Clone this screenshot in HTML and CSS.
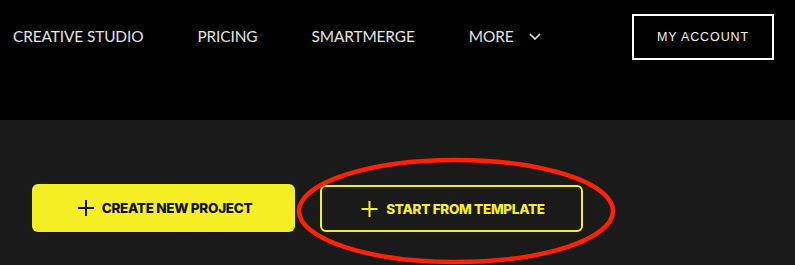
FILE: index.html
```html
<!DOCTYPE html>
<html>
<head>
<meta charset="utf-8">
<link rel="stylesheet" href="styles.css">
</head>
<body>
<header class="topbar">
  <nav class="nav">
    <a class="nav-item">CREATIVE STUDIO</a>
    <a class="nav-item">PRICING</a>
    <a class="nav-item">SMARTMERGE</a>
    <a class="nav-item more">MORE
      <svg class="chev" width="12" height="7" viewBox="0 0 12 7"><path d="M1 1 L6 6 L11 1" fill="none" stroke="#e6e6e6" stroke-width="1.6"/></svg>
    </a>
  </nav>
  <a class="account">MY ACCOUNT</a>
</header>
<main class="main">
  <button class="btn btn-solid">
    <svg class="plus" width="16" height="16" viewBox="0 0 16 16"><path d="M8 0 V16 M0 8 H16" stroke="#111" stroke-width="2"/></svg>
    <span>CREATE NEW PROJECT</span>
  </button>
  <button class="btn btn-outline">
    <svg class="plus" width="17" height="16" viewBox="0 0 16 16"><path d="M8 0 V16 M0 8 H16" stroke="#f5ef24" stroke-width="2"/></svg>
    <span>START FROM TEMPLATE</span>
  </button>
  <svg class="annot" width="330" height="116" viewBox="0 0 330 116">
    <ellipse cx="165" cy="58" rx="157" ry="51" fill="none" stroke="#ff2200" stroke-width="4.5"/>
  </svg>
</main>
</body>
</html>
```

FILE: styles.css
```css
html, body {
  margin: 0;
  padding: 0;
  background: #1a1a1a;
  width: 795px;
  height: 265px;
  overflow: hidden;
}
.topbar {
  height: 120px;
  background: #000;
  box-sizing: border-box;
  padding: 14px 21px 0 13px;
  display: flex;
  align-items: flex-start;
  justify-content: space-between;
}
.nav {
  display: flex;
  align-items: center;
  height: 44px;
  gap: 54px;
}
.nav-item {
  font-family: "Lato", "Noto Sans", sans-serif;
  font-size: 15.4px;
  color: #e4e4e4;
  letter-spacing: -0.1px;
  display: flex;
  align-items: center;
}
.more .chev {
  margin-left: 15px;
  margin-top: 0;
}
.account {
  box-sizing: border-box;
  width: 142px;
  height: 46px;
  border: 2px solid #fff;
  display: flex;
  align-items: center;
  justify-content: center;
  font-family: "Liberation Sans", Arial, sans-serif;
  font-size: 12.5px;
  letter-spacing: 0.9px;
  color: #f2f2f2;
}
.main {
  position: relative;
  display: flex;
  gap: 25px;
  padding: 64px 0 0 32px;
}
.btn {
  box-sizing: border-box;
  width: 263px;
  height: 48px;
  border-radius: 6px;
  display: flex;
  align-items: center;
  justify-content: center;
  gap: 8px;
  font-family: "Inter", "Liberation Sans", sans-serif;
  font-weight: 800;
  font-size: 13.5px;
  letter-spacing: -0.3px;
  padding: 0 0 0 3px;
  margin: 0;
  cursor: pointer;
}
.btn-solid {
  background: #f5ef24;
  color: #111;
  border: none;
}
.btn-outline {
  background: transparent;
  color: #f5ef24;
  border: 2px solid #f5ef24;
  margin-top: 1px;
  height: 47px;
}
.annot {
  position: absolute;
  left: 291px;
  top: 33px;
}
```
